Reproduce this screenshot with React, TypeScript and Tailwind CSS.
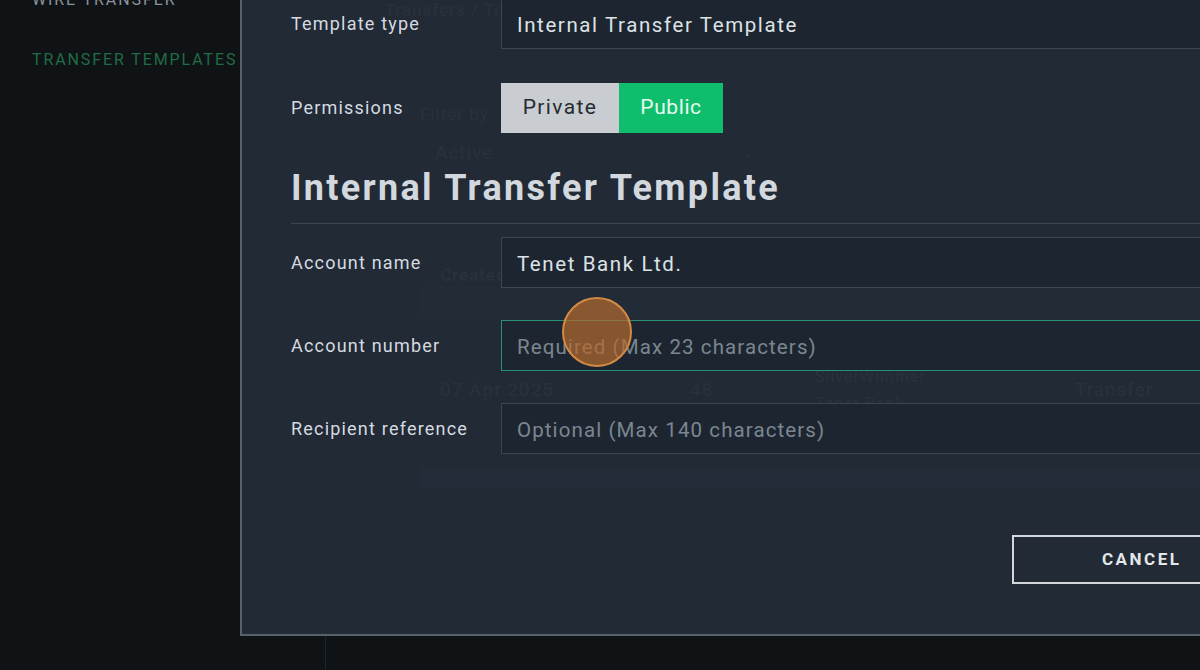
import React from "react";

const font = { fontFamily: "Roboto, 'Liberation Sans', sans-serif" };

function Field({ label, value, placeholder, active }: { label: string; value?: string; placeholder?: string; active?: boolean }) {
  return (
    <div className="flex items-center">
      <div className="w-[210px] shrink-0 text-[18px] text-[#d5dae0] tracking-[1.2px]">{label}</div>
      <div
        className={
          "h-[51px] flex-1 flex items-center pl-[15px] pt-[3px] text-[20.5px] bg-[#1d2630] border " +
          (active ? "border-[#2b8f72]" : "border-[#3a4651]")
        }
      >
        {value ? (
          <span className="text-[#dde2e7] tracking-[1.6px]">{value}</span>
        ) : (
          <span className="text-[#7b8691] tracking-[1.1px]">{placeholder}</span>
        )}
      </div>
    </div>
  );
}

export default function App() {
  return (
    <div className="relative w-[1200px] h-[670px] overflow-hidden bg-[#101316]" style={font}>
      <div className="flex h-full">
        {/* Sidebar */}
        <div className="w-[326px] shrink-0 border-r border-[#1e242a] pl-[32px] flex flex-col">
          <div className="mt-[-12px] text-[16px] tracking-[1.9px] text-[#8b929a] uppercase">Wire Transfer</div>
          <div className="mt-[36px] text-[16px] tracking-[1.9px] text-[#1f6c46] uppercase">Transfer Templates</div>
        </div>
        {/* Page behind modal */}
        <div className="flex-1 pl-[59px] text-[#c5ccd3]">
          <div className="mt-[-2px] text-[17px] tracking-[1px]">Transfers / Transfer Templates</div>
          <div className="ml-[35px] mt-[78px] text-[17px] tracking-[1px]">Filter by</div>
          <div className="ml-[35px] mt-[6px] w-[350px] h-[40px] flex items-center justify-between px-[15px] text-[19px] tracking-[1px]">
            <span>Active</span>
            <span className="text-[14px]">⌄</span>
          </div>
          <div className="ml-[35px] mt-[93px] h-[20px] flex items-center text-[17px] font-semibold tracking-[1px]">
            <div className="w-[270px] pl-[20px]">Created</div>
            <div className="w-[125px]">ID</div>
            <div className="w-[260px]">Name</div>
            <div>Type</div>
          </div>
          <div className="ml-[35px] mt-[0px] h-[30px] bg-[#c5ccd3]/20" />
          <div className="ml-[35px] mt-[32px] flex items-center text-[19px] tracking-[1px]">
            <div className="w-[270px] pl-[20px]">07 Apr 2025</div>
            <div className="w-[125px]">48</div>
            <div className="w-[260px] text-[16px] leading-[27px]">SilverWimmer<br />Tenet Bank</div>
            <div className="leading-[28px]">Internal<br />Transfer<br />Template</div>
          </div>
          <div className="ml-[35px] mt-[36px] h-[20px] bg-[#c5ccd3]/30" />
        </div>
      </div>

      {/* Modal */}
      <div className="absolute left-[240px] top-[-40px] w-[1100px] h-[676px] border-2 border-[#56616c] bg-[#222c37]/[0.965] pl-[49px] pt-[36px] flex flex-col">
        <Field label="Template type" value="Internal Transfer Template" />
        <div className="flex items-center mt-[32px]">
          <div className="w-[210px] shrink-0 text-[18px] text-[#d5dae0] tracking-[1.2px]">Permissions</div>
          <div className="flex h-[52px] pt-[2px] text-[21px]">
            <div className="w-[118px] flex items-center justify-center bg-[#c9cdd2] text-[#262b30] tracking-[1.4px]">Private</div>
            <div className="w-[104px] flex items-center justify-center bg-[#0ebe6d] text-[#e9fbf1] tracking-[0.6px]">Public</div>
          </div>
        </div>
        <div className="mt-[31px] pb-[11px] border-b border-[#3a4652]">
          <div className="h-[48px] flex items-center text-[36px] font-bold text-[#d2d8de] tracking-[2.3px]">Internal Transfer Template</div>
        </div>
        <div className="mt-[13px] flex flex-col gap-[32px]">
          <Field label="Account name" value="Tenet Bank Ltd." />
          <Field label="Account number" placeholder="Required (Max 23 characters)" active />
          <Field label="Recipient reference" placeholder="Optional (Max 140 characters)" />
        </div>
        <div className="mt-[81px] flex">
          <div className="ml-[721px] w-[260px] h-[49px] border-2 border-[#d3d7db] flex items-center pl-[88px] text-[17px] font-bold tracking-[2.5px] text-[#e3e7ea]">
            CANCEL
          </div>
        </div>
      </div>

      {/* Cursor indicator */}
      <div className="absolute left-[562px] top-[297px] w-[70px] h-[70px] rounded-full bg-[#b5692e]/70 border-2 border-[#d48a45]" />
    </div>
  );
}
